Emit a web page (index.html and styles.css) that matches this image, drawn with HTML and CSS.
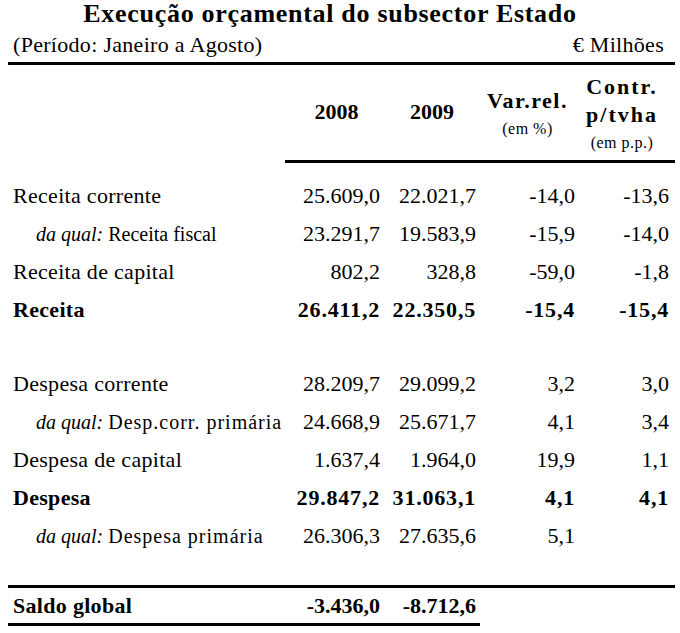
FILE: index.html
```html
<!DOCTYPE html>
<html lang="pt">
<head>
<meta charset="utf-8">
<title>Execução orçamental do subsector Estado</title>
<link rel="stylesheet" href="styles.css">
</head>
<body>
<div class="page">
  <h1 class="title">Execução orçamental do subsector Estado</h1>
  <div class="subtitle"><span>(Período: Janeiro a Agosto)</span><span>€ Milhões</span></div>
  <table class="tbl">
    <colgroup>
      <col class="c-label"><col class="c-2008"><col class="c-2009"><col class="c-var"><col class="c-contr">
    </colgroup>
    <thead>
      <tr>
        <th class="blank"></th>
        <th class="h y08"><div class="hy">2008</div></th>
        <th class="h"><div class="hy">2009</div></th>
        <th class="h var"><div class="hl">Var.rel.</div><div class="hs">(em %)</div></th>
        <th class="h contr"><div class="hl">Contr.</div><div class="hl">p/tvha</div><div class="hs">(em p.p.)</div></th>
      </tr>
    </thead>
    <tbody>
      <tr class="sp sp-top"><td colspan="5"></td></tr>
      <tr class="row"><td class="lbl">Receita corrente</td><td class="n">25.609,0</td><td class="n">22.021,7</td><td class="n">-14,0</td><td class="n last">-13,6</td></tr>
      <tr class="row sub"><td class="lbl"><i>da qual:</i> Receita fiscal</td><td class="n">23.291,7</td><td class="n">19.583,9</td><td class="n">-15,9</td><td class="n last">-14,0</td></tr>
      <tr class="row"><td class="lbl">Receita de capital</td><td class="n">802,2</td><td class="n">328,8</td><td class="n">-59,0</td><td class="n last">-1,8</td></tr>
      <tr class="row b"><td class="lbl">Receita</td><td class="n">26.411,2</td><td class="n">22.350,5</td><td class="n">-15,4</td><td class="n last">-15,4</td></tr>
      <tr class="sp sp-mid"><td colspan="5"></td></tr>
      <tr class="row"><td class="lbl">Despesa corrente</td><td class="n">28.209,7</td><td class="n">29.099,2</td><td class="n">3,2</td><td class="n last">3,0</td></tr>
      <tr class="row sub"><td class="lbl"><i>da qual:</i> <span class="wide">Desp.corr. primária</span></td><td class="n">24.668,9</td><td class="n">25.671,7</td><td class="n">4,1</td><td class="n last">3,4</td></tr>
      <tr class="row"><td class="lbl">Despesa de capital</td><td class="n">1.637,4</td><td class="n">1.964,0</td><td class="n">19,9</td><td class="n last">1,1</td></tr>
      <tr class="row b"><td class="lbl">Despesa</td><td class="n">29.847,2</td><td class="n">31.063,1</td><td class="n">4,1</td><td class="n last">4,1</td></tr>
      <tr class="row sub"><td class="lbl"><i>da qual:</i> <span class="wide">Despesa primária</span></td><td class="n">26.306,3</td><td class="n">27.635,6</td><td class="n">5,1</td><td class="n last"></td></tr>
      <tr class="sp sp-end"><td colspan="5"></td></tr>
      <tr class="saldo"><td class="lbl u">Saldo global</td><td class="n u">-3.436,0</td><td class="n u">-8.712,6</td><td class="n"></td><td class="n last"></td></tr>
    </tbody>
  </table>
</div>
</body>
</html>
```
FILE: styles.css
```css
html, body {
  margin: 0;
  padding: 0;
  background: #fff;
}
body {
  font-family: "Liberation Serif", "Times New Roman", serif;
  color: #000;
}
.page {
  width: 667px;
  margin-left: 8px;
}
.title {
  margin: 0;
  padding-right: 23px;
  font-size: 26px;
  line-height: 28px;
  font-weight: bold;
  letter-spacing: 0.7px;
  text-align: center;
}
.subtitle {
  display: flex;
  justify-content: space-between;
  padding: 0 11px 0 5px;
  font-size: 22px;
  line-height: 34px;
  letter-spacing: 0.3px;
  border-bottom: 3px solid #000;
}
.tbl {
  width: 667px;
  table-layout: fixed;
  border-collapse: separate;
  border-spacing: 0;
}
.c-label { width: 277px; }
.c-2008 { width: 99px; }
.c-2009 { width: 96px; }
.c-var { width: 99px; }
.c-contr { width: 96px; }

.tbl th, .tbl td {
  padding: 0;
}
.tbl th {
  box-sizing: border-box;
  height: 98px;
  padding-top: 4px;
  vertical-align: middle;
  text-align: center;
  font-weight: bold;
  font-size: 22px;
}
.tbl th.h {
  border-bottom: 3px solid #000;
}
.tbl th.y08 { padding-left: 4px; }
.tbl th.var { padding-right: 4px; }
.tbl th.contr { padding-right: 10px; }
.hy {
  line-height: 28px;
  padding-bottom: 6px;
}
.hl {
  line-height: 28px;
  letter-spacing: 2px;
}
.var .hl { letter-spacing: 1.5px; }
.hs {
  line-height: 28px;
  font-size: 16px;
  font-weight: normal;
  letter-spacing: 0.5px;
}

.sp td { font-size: 0; line-height: 0; }
.sp-top td { height: 14px; }
.sp-mid td { height: 36px; }
.sp-end td { height: 30px; }

.row td {
  height: 38px;
  line-height: 38px;
  vertical-align: top;
  font-size: 22px;
  white-space: nowrap;
}
.lbl {
  padding-left: 5px !important;
  letter-spacing: 0.3px;
}
.sub .lbl {
  padding-left: 28px !important;
  font-size: 20px;
  letter-spacing: 0;
}
.wide { letter-spacing: 1px; }
.n {
  text-align: right;
  padding-right: 4px !important;
}
.n.last { padding-right: 6px !important; }
.b td { font-weight: bold; }
.b .n { letter-spacing: 0.8px; }

.saldo td {
  box-sizing: border-box;
  height: 41px;
  line-height: 35px;
  vertical-align: top;
  font-size: 22px;
  font-weight: bold;
  white-space: nowrap;
  border-top: 3px solid #000;
}
.saldo td.u {
  border-bottom: 3px solid #000;
}
```
